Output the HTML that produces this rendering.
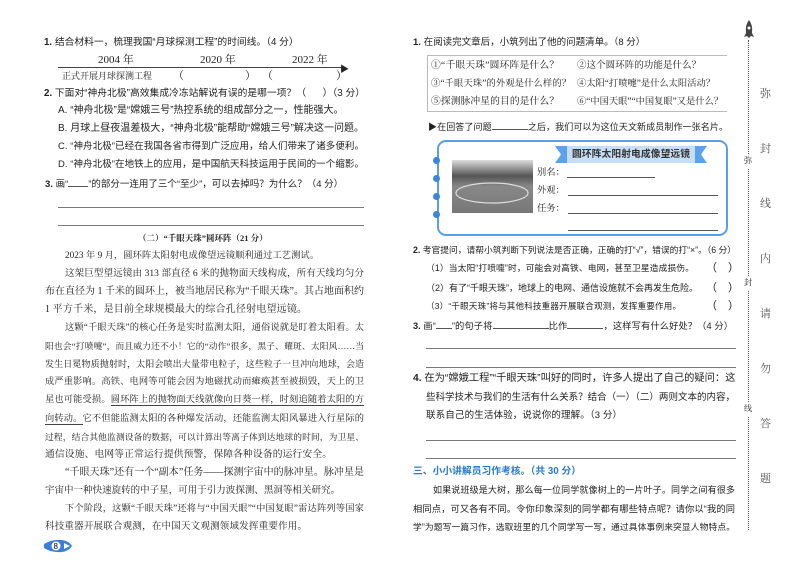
<!DOCTYPE html>
<html><head><meta charset="utf-8">
<style>
*{margin:0;padding:0;box-sizing:border-box}
body{width:800px;height:566px;background:#fff;position:relative;overflow:hidden;font-family:"Liberation Serif","Noto Serif CJK SC","Noto Sans CJK SC",serif;color:#222;font-size:11px}
.a,.j{position:absolute;white-space:nowrap;line-height:14px;font-size:11px;overflow:visible}
.j{text-align:justify;text-align-last:justify}
.hl{position:absolute;height:1px;background:#777}
.s{font-family:"Liberation Sans","Noto Sans CJK SC",sans-serif}
.u{border-bottom:1px solid #555;display:inline-block;height:11px}
.side{position:absolute;left:760px;font-size:11px;color:#555}
</style></head><body>
<!-- LEFT -->
<div class="a s" style="left:44px;top:36px;width:255px"><b>1.</b> 结合材料一，梳理我国“月球探测工程”的时间线。（4 分）</div>
<div class="a" style="left:98px;top:53px;width:40px">2004 年</div>
<div class="a" style="left:200px;top:53px;width:40px">2020 年</div>
<div class="a" style="left:292px;top:53px;width:40px">2022 年</div>
<div class="hl" style="left:58px;top:67px;width:286px;background:#444"></div>
<div class="a" style="left:340px;top:62px;font-size:9px">▶</div>
<div class="a" style="left:62px;top:69px;width:100px;font-size:9px">正式开展月球探测工程</div>
<div class="a" style="left:173px;top:69px">（</div>
<div class="a" style="left:245px;top:69px">）</div>
<div class="a" style="left:262px;top:69px">（</div>
<div class="a" style="left:336px;top:69px">）</div>
<div class="j s" style="left:44px;top:87px;width:321px"><b>2.</b> 下面对“神舟北极”高效集成冷冻站解说有误的是哪一项？（&nbsp; &nbsp; &nbsp; ）（3 分）</div>
<div class="a s" style="left:58px;top:104px;width:290px">A. “神舟北极”是“嫦娥三号”热控系统的组成部分之一，性能强大。</div>
<div class="j s" style="left:58px;top:122px;width:306px">B. 月球上昼夜温差极大，“神舟北极”能帮助“嫦娥三号”解决这一问题。</div>
<div class="j s" style="left:58px;top:140px;width:306px">C. “神舟北极”已经在我国各省市得到广泛应用，给人们带来了诸多便利。</div>
<div class="j s" style="left:58px;top:158px;width:306px">D. “神舟北极”在地铁上的应用，是中国航天科技运用于民间的一个缩影。</div>
<div class="a s" style="left:45px;top:176px;width:303px"><b>3.</b> 画“<span class="u" style="width:20px"></span>”的部分一连用了三个“至少”，可以去掉吗？为什么？（4 分）</div>
<div class="hl" style="left:58px;top:207px;width:306px"></div>
<div class="hl" style="left:58px;top:225px;width:306px"></div>
<div class="a" style="left:138px;top:231px;width:132px;font-weight:bold">（二）“千眼天珠”圆环阵（21 分）</div>
<div class="j" style="left:65px;top:249px;width:254px">2023 年 9 月，圆环阵太阳射电成像望远镜顺利通过工艺测试。</div>
<div class="j" style="left:65px;top:267px;width:299px">这架巨型望远镜由 313 部直径 6 米的抛物面天线构成，所有天线均匀分</div>
<div class="j" style="left:45px;top:285px;width:319px">布在直径为 1 千米的圆环上，被当地居民称为“千眼天珠”。其占地面积约</div>
<div class="j" style="left:45px;top:303px;width:262px">1 平方千米，是目前全球规模最大的综合孔径射电望远镜。</div>
<div class="j" style="left:65px;top:321px;width:299px">这颗“千眼天珠”的核心任务是实时监测太阳，通俗说就是盯着太阳看。太</div>
<div class="j" style="left:45px;top:339px;width:319px">阳也会“打喷嚏”，而且威力还不小！它的“动作”很多，黑子、耀斑、太阳风……当</div>
<div class="j" style="left:45px;top:357px;width:319px">发生日冕物质抛射时，太阳会喷出大量带电粒子，这些粒子一旦冲向地球，会造</div>
<div class="j" style="left:45px;top:375px;width:319px">成严重影响。高铁、电网等可能会因为地磁扰动而瘫痪甚至被损毁，天上的卫</div>
<div class="j" style="left:45px;top:393px;width:319px">星也可能受损。<span style="border-bottom:1px solid #444">圆环阵上的抛物面天线就像向日葵一样，时刻追随着太阳的方</span></div>
<div class="j" style="left:45px;top:412px;width:319px"><span style="border-bottom:1px solid #444">向转动。</span>它不但能监测太阳的各种爆发活动，还能监测太阳风暴进入行星际的</div>
<div class="j" style="left:45px;top:430px;width:319px">过程，结合其他监测设备的数据，可以计算出等离子体到达地球的时间，为卫星、</div>
<div class="j" style="left:45px;top:448px;width:287px">通信设施、电网等正常运行提供预警，保障各种设备的运行安全。</div>
<div class="j" style="left:65px;top:466px;width:299px">“千眼天珠”还有一个“副本”任务——探测宇宙中的脉冲星。脉冲星是</div>
<div class="j" style="left:45px;top:484px;width:295px">宇宙中一种快速旋转的中子星，可用于引力波探测、黑洞等相关研究。</div>
<div class="j" style="left:65px;top:502px;width:299px">下个阶段，这颗“千眼天珠”还将与“中国天眼”“中国复眼”雷达阵列等国家</div>
<div class="j" style="left:45px;top:520px;width:262px">科技重器开展联合观测，在中国天文观测领域发挥重要作用。</div>
<svg style="position:absolute;left:42px;top:537px" width="32" height="18"><path d="M2 7 Q10 2 20 3 Q27 4 30 9 Q27 14 20 15 Q10 16 2 11 Z" fill="#3a7fd8"/><circle cx="14" cy="9" r="4.5" fill="#fff"/><text x="11.5" y="12" font-size="8" font-family="Liberation Sans" fill="#000">8</text><path d="M22 6 L28 9 L22 12" fill="#fff"/></svg>

<!-- RIGHT -->
<div class="a s" style="left:413px;top:36px;width:234px"><b>1.</b> 在阅读完文章后，小筑列出了他的问题清单。（8 分）</div>
<div style="position:absolute;left:427px;top:55px;width:300px;height:57px;border:1px solid #bbb;border-right:none"></div>
<div class="j" style="left:431px;top:59px;width:128px">①“千眼天珠”圆环阵是什么？</div>
<div class="j" style="left:577px;top:59px;width:124px">②这个圆环阵的功能是什么？</div>
<div class="j" style="left:431px;top:77px;width:140px">③“千眼天珠”的外观是什么样的？</div>
<div class="j" style="left:577px;top:77px;width:138px">④太阳“打喷嚏”是什么太阳活动？</div>
<div class="j" style="left:431px;top:95px;width:128px">⑤探测脉冲星的目的是什么？</div>
<div class="j" style="left:577px;top:95px;width:146px">⑥“中国天眼”“中国复眼”又是什么？</div>
<div class="j s" style="left:428px;top:119px;width:300px">▶在回答了问题<span class="u" style="width:36px"></span>之后，我们可以为这位天文新成员制作一张名片。</div>
<div style="position:absolute;left:437px;top:140px;width:291px;height:96px;border:2.5px solid #5a9fe6;border-radius:9px"></div>
<div style="position:absolute;left:433px;top:157px;width:7px;height:7px;border-radius:50%;background:#3a85e0"></div>
<div style="position:absolute;left:433px;top:175px;width:7px;height:7px;border-radius:50%;background:#3a85e0"></div>
<div style="position:absolute;left:433px;top:193px;width:7px;height:7px;border-radius:50%;background:#3a85e0"></div>
<div style="position:absolute;left:433px;top:211px;width:7px;height:7px;border-radius:50%;background:#3a85e0"></div>
<svg style="position:absolute;left:555px;top:146px" width="152" height="17"><path d="M0 0 H152 L146 8.5 L152 17 H0 L6 8.5 Z" fill="#5aa3ea"/><rect x="12" y="0" width="128" height="17" fill="#c7def7"/></svg>
<div class="j s" style="left:572px;top:148px;width:118px;font-weight:bold;color:#333">圆环阵太阳射电成像望远镜</div>
<svg style="position:absolute;left:452px;top:160px" width="81" height="53"><defs><linearGradient id="g" x1="0" y1="0" x2="0" y2="1"><stop offset="0" stop-color="#ddd"/><stop offset="0.3" stop-color="#555"/><stop offset="0.5" stop-color="#888"/><stop offset="1" stop-color="#777"/></linearGradient></defs><rect width="81" height="53" fill="url(#g)"/><ellipse cx="40" cy="33" rx="36" ry="10" fill="none" stroke="#ddd" stroke-width="1.2"/></svg>
<div class="a" style="left:537px;top:166px;width:28px">别名：</div><div class="hl" style="left:567px;top:177px;width:88px;background:#555"></div>
<div class="a" style="left:537px;top:184px;width:28px">外观：</div><div class="hl" style="left:568px;top:195px;width:150px;background:#555"></div>
<div class="a" style="left:537px;top:202px;width:28px">任务：</div><div class="hl" style="left:568px;top:213px;width:150px;background:#555"></div>
<div class="hl" style="left:568px;top:230px;width:150px;background:#555"></div>
<div class="j s" style="left:413px;top:243px;width:323px"><b>2.</b> 考官提问，请帮小筑判断下列说法是否正确，正确的打“√”，错误的打“×”。（6 分）</div>
<div class="j s" style="left:426px;top:261px;width:268px">（1）当太阳“打喷嚏”时，可能会对高铁、电网，甚至卫星造成损伤。</div>
<div class="a s" style="left:706px;top:261px">（</div><div class="a s" style="left:728px;top:261px">）</div>
<div class="j s" style="left:426px;top:281px;width:272px">（2）有了“千眼天珠”，地球上的电网、通信设施就不会再发生危险。</div>
<div class="a s" style="left:706px;top:281px">（</div><div class="a s" style="left:728px;top:281px">）</div>
<div class="j s" style="left:426px;top:299px;width:255px">（3）“千眼天珠”将与其他科技重器开展联合观测，发挥重要作用。</div>
<div class="a s" style="left:706px;top:299px">（</div><div class="a s" style="left:728px;top:299px">）</div>
<div class="j s" style="left:413px;top:318px;width:320px"><b>3.</b> 画“<span class="u" style="width:16px"></span>”的句子将<span class="u" style="width:56px"></span>比作<span class="u" style="width:36px"></span>，这样写有什么好处？（4 分）</div>
<div class="hl" style="left:426px;top:348px;width:310px"></div>
<div class="hl" style="left:426px;top:367px;width:310px"></div>
<div class="j s" style="left:413px;top:372px;width:322px"><b>4.</b> 在为“嫦娥工程”“千眼天珠”叫好的同时，许多人提出了自己的疑问：这</div>
<div class="j s" style="left:426px;top:391px;width:309px">些科学技术与我们的生活有什么关系？结合（一）（二）两则文本的内容，</div>
<div class="j s" style="left:426px;top:409px;width:196px">联系自己的生活体验，说说你的理解。（3 分）</div>
<div class="hl" style="left:426px;top:440px;width:310px"></div>
<div class="hl" style="left:426px;top:458px;width:310px"></div>
<div class="j s" style="left:413px;top:465px;width:168px;color:#2a7ad0;font-weight:bold">三、小小讲解员习作考核。（共 30 分）</div>
<div class="j s" style="left:433px;top:483px;width:302px">如果说班级是大树，那么每一位同学就像树上的一片叶子。同学之间有很多</div>
<div class="j s" style="left:413px;top:502px;width:322px">相同点，可又各有不同。令你印象深刻的同学都有哪些特点呢？请你以“我的同</div>
<div class="j s" style="left:413px;top:520px;width:322px">学”为题写一篇习作，选取班里的几个同学写一写，通过具体事例来突显人物特点。</div>

<!-- margin -->
<svg style="position:absolute;left:743px;top:20px" width="12" height="20"><path d="M6 0 Q10 5 9 13 L11 17 L8 16 L6 18 L4 16 L1 17 L3 13 Q2 5 6 0Z" fill="#444"/><circle cx="6" cy="8" r="1.5" fill="#fff"/></svg>
<div style="position:absolute;left:748px;top:40px;height:490px;border-left:1px dotted #555"></div>
<div class="side" style="top:85px">弥</div>
<div class="side" style="top:140px">封</div>
<div class="side" style="top:195px">线</div>
<div class="side" style="top:250px">内</div>
<div class="side" style="top:305px">请</div>
<div class="side" style="top:360px">勿</div>
<div class="side" style="top:415px">答</div>
<div class="side" style="top:470px">题</div>
<div class="a" style="left:744px;top:154px;font-size:8px;background:#fff">弥</div>
<div class="a" style="left:744px;top:276px;font-size:8px;background:#fff">封</div>
<div class="a" style="left:744px;top:402px;font-size:8px;background:#fff">线</div>
<script>
document.querySelectorAll('.a,.j').forEach(function(el){
  var w=parseFloat(el.style.width);
  if(!w)return;
  el.style.overflow='hidden';
  var fs=parseFloat(getComputedStyle(el).fontSize);
  while(el.scrollWidth>w+0.5&&fs>5){fs-=0.25;el.style.fontSize=fs+'px';}
  el.style.overflow='visible';
});
</script>
</body></html>
